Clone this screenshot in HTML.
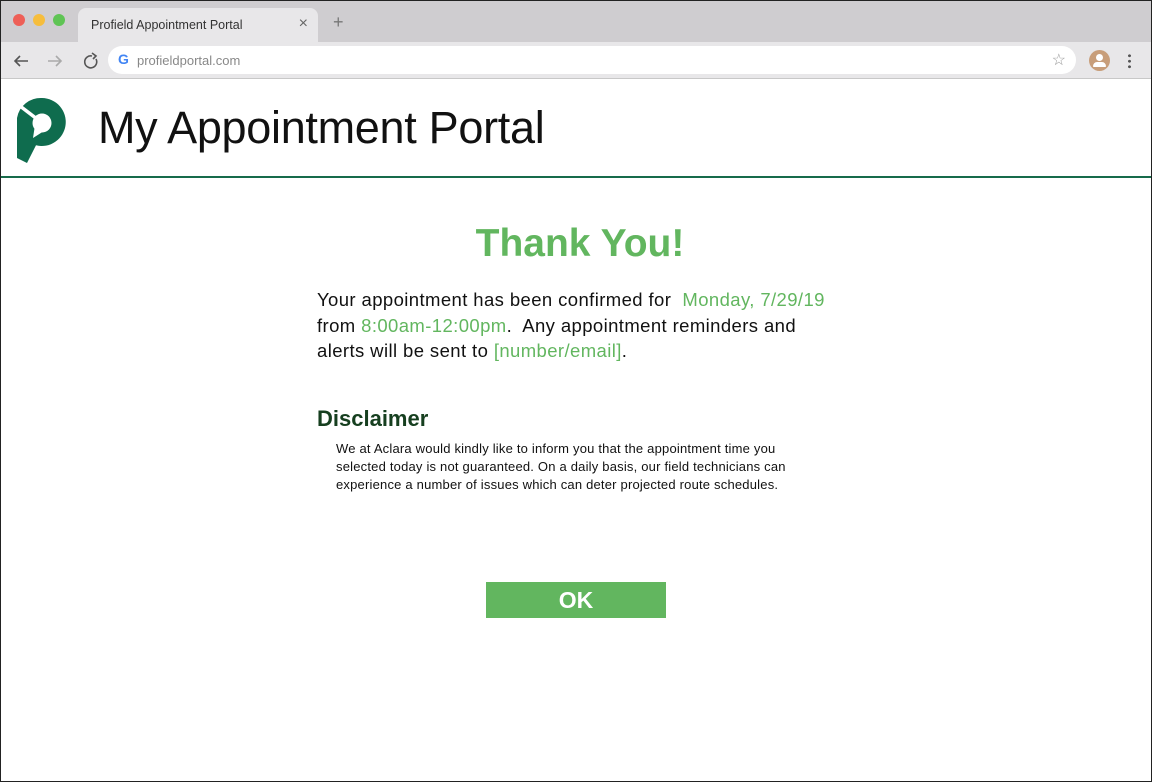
<!DOCTYPE html>
<html><head><style>
*{margin:0;padding:0;box-sizing:border-box}
body{width:1152px;height:782px;overflow:hidden;background:#fff;font-family:"Liberation Sans",sans-serif;position:relative}
.frame{position:absolute;inset:0;border:1px solid #222;pointer-events:none;z-index:9}
.tabbar{position:absolute;left:0;top:0;width:1152px;height:42px;background:#cfcdd0}
.tab{position:absolute;left:78px;top:8px;width:240px;height:34px;background:#e8e7e9;border-radius:8px 8px 0 0;font-size:12.5px;color:#333;padding:10px 0 0 13px}
.dot{position:absolute;top:14px;width:12px;height:12px;border-radius:50%}
.toolbar{position:absolute;left:0;top:42px;width:1152px;height:37px;background:#e8e7e9;border-bottom:1px solid #c8c8c8}
.addr{position:absolute;left:108px;top:4px;width:968px;height:28px;background:#fff;border-radius:14px;font-size:13px;color:#888;padding:7px 0 0 29px}
.title{position:absolute;left:98px;top:102px;font-size:45px;font-weight:300;color:#111;letter-spacing:-0.3px}
.line{position:absolute;left:0;top:176px;width:1152px;height:2px;background:#176b4b}
.ty{position:absolute;left:0;width:1160px;text-align:center;top:222px;font-size:39px;font-weight:bold;color:#62b65f}
.p{position:absolute;left:317px;top:287px;font-size:18.5px;line-height:25.5px;color:#111;white-space:nowrap;letter-spacing:0.4px}
.g{color:#62b65f}
.dh{position:absolute;left:317px;top:406px;font-size:22px;font-weight:bold;color:#163f1f}
.dt{position:absolute;left:336px;top:440px;font-size:13px;line-height:18px;color:#111;white-space:nowrap;letter-spacing:0.2px}
.ok{position:absolute;left:486px;top:582px;width:180px;height:36px;background:#62b65f;color:#fff;font-weight:bold;font-size:23px;text-align:center;line-height:36px}
</style></head><body>
<div class="tabbar">
<div class="dot" style="left:13px;background:#ee5f57"></div>
<div class="dot" style="left:33px;background:#f6bd3c"></div>
<div class="dot" style="left:53px;background:#5fc454"></div>
<div class="tab">Profield Appointment Portal<span style="position:absolute;right:10px;top:7px;font-size:16px;color:#666">×</span></div>
<div style="position:absolute;left:333px;top:12px;font-size:18px;color:#777">+</div>
</div>
<div class="toolbar">
<svg style="position:absolute;left:12px;top:10px" width="90" height="18" viewBox="0 0 90 18"><g fill="none" stroke-width="1.6"><path d="M16 9H3M8 4L3 9l5 5" stroke="#555"/><path d="M36 9h13M44 4l5 5-5 5" stroke="#aaa"/><path d="M80 4a6 6 0 1 0 4 3" stroke="#555"/><path d="M80 1l4 3-3 3" stroke="#555"/></g></svg>
<div class="addr"><span style="position:absolute;left:10px;top:5px;font-weight:bold;font-size:14px;color:#4285f4">G</span>profieldportal.com<span style="position:absolute;right:10px;top:4px;font-size:16px;color:#999">☆</span></div>
<div style="position:absolute;left:1089px;top:8px;width:21px;height:21px;border-radius:50%;background:#c89e7a"><div style="position:absolute;left:7px;top:4px;width:7px;height:7px;border-radius:50%;background:#fff"></div><div style="position:absolute;left:4px;top:12px;width:13px;height:5px;border-radius:5px 5px 1px 1px;background:#fff"></div></div>
<div style="position:absolute;left:1128px;top:11px;width:3px;height:16px;background:radial-gradient(circle,#555 1.3px,transparent 1.6px) 0 0/3px 5.5px"></div>
</div>
<svg style="position:absolute;left:14px;top:96px" width="56" height="70" viewBox="0 0 56 70">
<path d="M28 2A24 24 0 1 1 22 49.3L13 67L3 62L3 22A24 24 0 0 1 28 2Z" fill="#0f6c4e"/>
<path d="M6 10L23 23" stroke="#fff" stroke-width="3.5"/>
<circle cx="28" cy="27" r="9.5" fill="#fff"/>
<path d="M21 29L19 42L30 35Z" fill="#fff"/>
</svg>
<div class="title">My Appointment Portal</div>
<div class="line"></div>
<div class="ty">Thank You!</div>
<div class="p">Your appointment has been confirmed for &nbsp;<span class="g">Monday, 7/29/19</span><br>from <span class="g">8:00am-12:00pm</span>.&nbsp; Any appointment reminders and<br>alerts will be sent to <span class="g">[number/email]</span>.</div>
<div class="dh">Disclaimer</div>
<div class="dt">We at Aclara would kindly like to inform you that the appointment time you<br>selected today is not guaranteed. On a daily basis, our field technicians can<br>experience a number of issues which can deter projected route schedules.</div>
<div class="ok">OK</div>
<div class="frame"></div>
</body></html>
